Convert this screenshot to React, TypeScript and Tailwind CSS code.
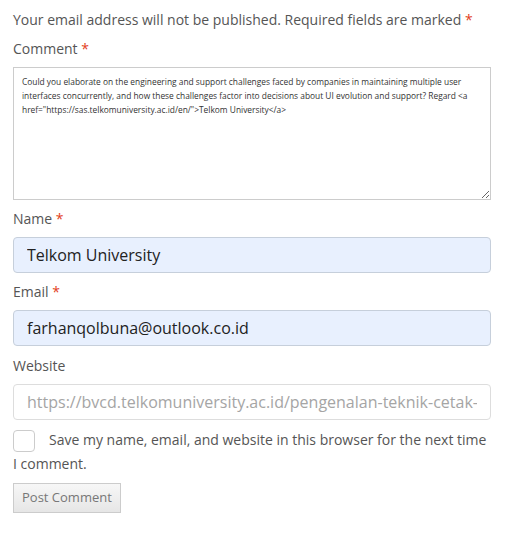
const Req = () => <span className="text-[#e2401c]">*</span>;

const Field = ({ label, required, value, placeholder, className = "" }: { label: string; required?: boolean; value?: string; placeholder?: string; className?: string }) => (
  <div className={className}>
    <label className="block text-[14px] leading-6 text-[#555]">
      {label} {required && <Req />}
    </label>
    <input
      readOnly
      defaultValue={value}
      placeholder={placeholder}
      className={`mt-[6px] block h-9 w-full rounded-[4px] border px-[13px] text-[16px] outline-none placeholder:text-[#a5a5a5] ${
        value ? "border-[#c6cfdb] bg-[#e8f0fe] text-[#222]" : "border-[#ddd] bg-white"
      }`}
    />
  </div>
);

export default function App() {
  return (
    <div className="min-h-[535px] bg-white px-[13px] pt-2 font-['Open_Sans',sans-serif] text-[#555]">
      <form className="w-[478px]">
        <p className="text-[14px] leading-6">
          Your email address will not be published. Required fields are marked <Req />
        </p>
        <label className="mt-[5px] block text-[14px] leading-6">
          Comment <Req />
        </label>
        <textarea
          readOnly
          className="mt-[6px] block h-[133px] w-full resize border border-[#ccc] px-[8px] py-[7px] text-[8.4px] leading-[14px] text-[#333] outline-none"
          defaultValue={
            'Could you elaborate on the engineering and support challenges faced by companies in maintaining multiple user interfaces concurrently, and how these challenges factor into decisions about UI evolution and support? Regard <a href="https://sas.telkomuniversity.ac.id/en/">Telkom University</a>'
          }
        />
        <Field className="mt-[7px]" label="Name" required value="Telkom University" />
        <Field className="mt-[7px]" label="Email" required value="farhanqolbuna@outlook.co.id" />
        <Field className="mt-2" label="Website" placeholder="https://bvcd.telkomuniversity.ac.id/pengenalan-teknik-cetak-saring/" />
        <p className="mt-2 text-[14px] leading-6">
          <span className="float-left mr-[14px] mt-[2px] h-[22px] w-[22px] rounded-[4px] border border-[#ccc] bg-white" />
          Save my name, email, and website in this browser for the next time I comment.
        </p>
        <button
          type="button"
          className="mt-[7px] h-[30px] border border-[#ccc] bg-gradient-to-b from-[#f7f7f7] to-[#e6e6e6] px-[8px] text-[13px] text-[#777]"
        >
          Post Comment
        </button>
      </form>
    </div>
  );
}
